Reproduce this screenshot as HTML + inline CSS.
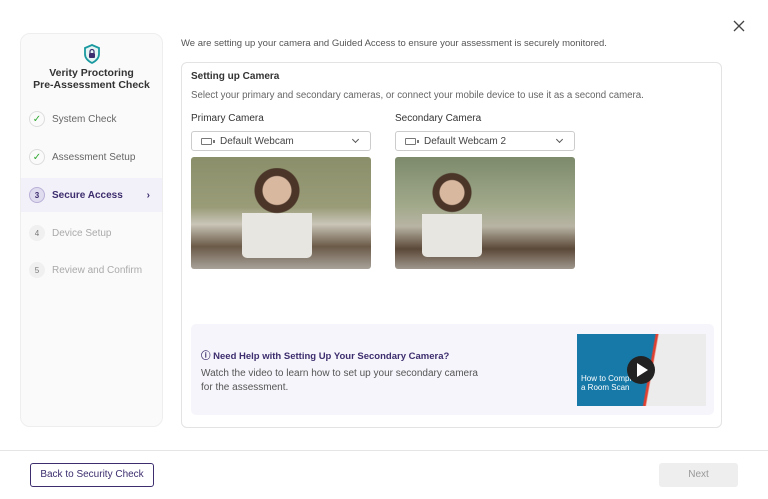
<!DOCTYPE html>
<html><head><style>
*{box-sizing:border-box;margin:0;padding:0}
body{width:768px;height:499px;background:#fff;font-family:"Liberation Sans",sans-serif;position:relative;overflow:hidden;color:#333}
.abs{position:absolute}
.side{left:20px;top:33px;width:143px;height:394px;border:1px solid #eee;border-radius:10px;background:#fafafa}
.step{position:absolute;left:0;width:141px;height:34px;display:flex;align-items:center;font-size:10px;color:#666}
.ic{width:16px;height:16px;border-radius:50%;margin-left:8px;margin-right:7px;display:flex;align-items:center;justify-content:center;font-size:8px;color:#777}
.sel{border:1px solid #ccc;border-radius:3px;height:20px;display:flex;align-items:center;font-size:10px;color:#444;padding-left:9px}
.cam{display:inline-block;width:11px;height:7px;border:1px solid #777;border-radius:1px;margin-right:8px;position:relative}
.cam:after{content:"";position:absolute;right:-4px;top:1px;width:2px;height:3px;background:#777}
.chev{position:absolute;right:12px;top:5px;width:5px;height:5px;border-right:1px solid #555;border-bottom:1px solid #555;transform:rotate(45deg)}
</style></head><body>
<svg class="abs" style="left:733px;top:20px" width="12" height="12" viewBox="0 0 12 12"><path d="M1 1L11 11M11 1L1 11" stroke="#444" stroke-width="1.3"/></svg>
<div class="abs side">
 <svg class="abs" style="left:62px;top:10px" width="18" height="20" viewBox="0 0 18 20"><path d="M9 1L16 4V10C16 14 13 17 9 19C5 17 2 14 2 10V4Z" fill="#e6f4f4" stroke="#1a9aa0" stroke-width="1.8"/><rect x="6" y="9" width="6" height="5" rx="1" fill="#3d2d6e"/><path d="M7 9V7.5A2 2 0 0 1 11 7.5V9" fill="none" stroke="#3d2d6e" stroke-width="1.2"/></svg>
 <div class="abs" style="left:0;width:141px;top:33px;text-align:center;font-size:10.5px;font-weight:bold;color:#333;line-height:12px">Verity Proctoring<br>Pre-Assessment Check</div>
 <div class="step" style="top:68px"><div class="ic" style="border:1px solid #ddd;color:#3a3;font-size:10px">✓</div>System Check</div>
 <div class="step" style="top:106px"><div class="ic" style="border:1px solid #ddd;color:#3a3;font-size:10px">✓</div>Assessment Setup</div>
 <div class="step" style="top:144px;background:#f2f0f8;color:#3d2d6e;font-weight:bold"><div class="ic" style="background:#e0dcef;border:1px solid #b9b0d8;color:#3d2d6e">3</div>Secure Access<span style="position:absolute;right:12px;font-size:10px">›</span></div>
 <div class="step" style="top:182px;color:#aaa"><div class="ic" style="background:#f0f0f0">4</div>Device Setup</div>
 <div class="step" style="top:219px;color:#aaa"><div class="ic" style="background:#f0f0f0">5</div>Review and Confirm</div>
</div>
<div class="abs" style="left:181px;top:38px;font-size:9.5px;color:#555">We are setting up your camera and Guided Access to ensure your assessment is securely monitored.</div>
<div class="abs" style="left:181px;top:62px;width:541px;height:366px;border:1px solid #e3e3e3;border-radius:6px">
 <div class="abs" style="left:9px;top:8px;font-size:10px;font-weight:bold;color:#333">Setting up Camera</div>
 <div class="abs" style="left:9px;top:27px;font-size:9.7px;color:#666">Select your primary and secondary cameras, or connect your mobile device to use it as a second camera.</div>
 <div class="abs" style="left:9px;top:50px;font-size:10px;color:#333">Primary Camera</div>
 <div class="abs" style="left:213px;top:50px;font-size:10px;color:#333">Secondary Camera</div>
 <div class="abs sel" style="left:9px;top:68px;width:180px"><span class="cam"></span>Default Webcam<span class="chev"></span></div>
 <div class="abs sel" style="left:213px;top:68px;width:180px"><span class="cam"></span>Default Webcam 2<span class="chev"></span></div>
 <div class="abs" style="left:9px;top:94px;width:180px;height:112px;border-radius:3px;background:linear-gradient(180deg,#8a8f6a 0%,#9a9c78 45%,#c9c5b8 60%,#6b5a48 80%,#a8a29a 100%)"></div>
 <div class="abs" style="left:60px;top:105px;width:70px;height:90px;border-radius:35px 35px 5px 5px;background:radial-gradient(circle at 50% 25%,#d9b8a0 0 14px,#4a3528 15px 22px,transparent 23px),linear-gradient(#0000 50%,#e8e6e0 50%)"></div>
 <div class="abs" style="left:213px;top:94px;width:180px;height:112px;border-radius:3px;background:linear-gradient(180deg,#7d8a6c 0%,#a3aa8c 45%,#b8b4a4 62%,#5b4838 82%,#9f978d 100%)"></div>
 <div class="abs" style="left:240px;top:108px;width:60px;height:86px;border-radius:30px 30px 5px 5px;background:radial-gradient(circle at 50% 25%,#d9b8a0 0 12px,#4a3528 13px 19px,transparent 20px),linear-gradient(#0000 50%,#e8e6e0 50%)"></div>
 <div class="abs" style="left:9px;top:261px;width:523px;height:91px;border-radius:5px;background:#f6f5fb">
  <div class="abs" style="left:10px;top:24px;font-size:9.5px;font-weight:bold;color:#3d2d6e">ⓘ Need Help with Setting Up Your Secondary Camera?</div>
  <div class="abs" style="left:10px;top:43px;font-size:10px;color:#555;line-height:14px">Watch the video to learn how to set up your secondary camera<br>for the assessment.</div>
  <div class="abs" style="left:386px;top:10px;width:129px;height:72px;background:linear-gradient(100deg,#1679a8 0 55%,#e04030 56% 57%,#ececec 58%)">
   <div class="abs" style="left:4px;top:40px;font-size:8px;color:#fff;line-height:9px">How to Complete<br>a Room Scan</div>
   <div class="abs" style="left:50px;top:22px;width:28px;height:28px;border-radius:50%;background:#222"><div class="abs" style="left:10px;top:7px;border-left:11px solid #fff;border-top:7px solid transparent;border-bottom:7px solid transparent"></div></div>
  </div>
 </div>
</div>
<div class="abs" style="left:0;top:450px;width:768px;border-top:1px solid #e5e5e5"></div>
<div class="abs" style="left:30px;top:463px;width:124px;height:24px;border:1.5px solid #3d2d6e;border-radius:3px;font-size:10px;color:#3d2d6e;text-align:center;line-height:21px">Back to Security Check</div>
<div class="abs" style="left:659px;top:463px;width:79px;height:24px;background:#eee;border-radius:3px;font-size:10px;color:#999;text-align:center;line-height:24px">Next</div>
</body></html>
